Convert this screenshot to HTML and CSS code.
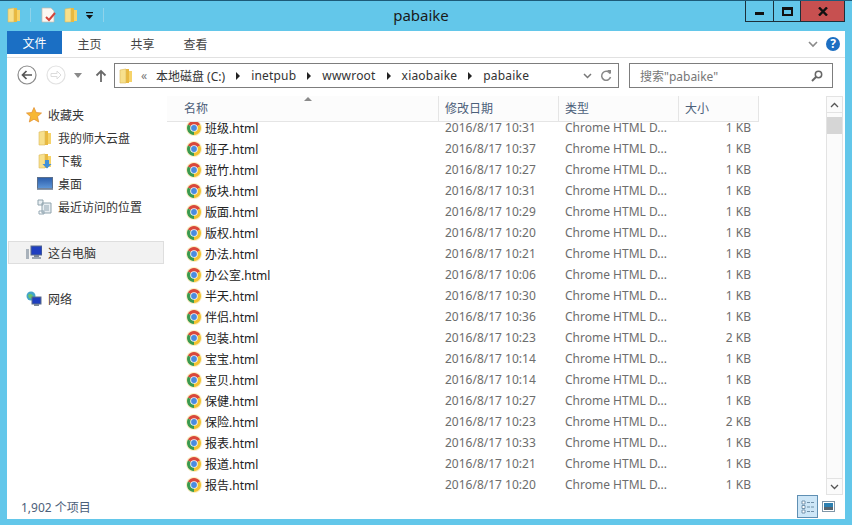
FILE: index.html
```html
<!DOCTYPE html>
<html lang="zh-CN">
<head>
    <meta charset="UTF-8">
    <title>pabaike</title>
    <link rel="stylesheet" href="styles.css">
</head>
<body>

    <svg class="defs" width="0" height="0">
        <defs>
            <linearGradient id="desk" x1="0" y1="0" x2="0" y2="1">
                <stop offset="0" stop-color="#2a5caa"/>
                <stop offset="1" stop-color="#5f97d8"/>
            </linearGradient>
        </defs>
        <symbol id="chrome" viewBox="0 0 16 16">
            <circle cx="8" cy="8" r="8" fill="#fbeec0"/>
            <path d="M8 8L1.94 4.5A7 7 0 0 1 14.06 4.5Z" fill="#d9483b"/>
            <path d="M8 8L14.06 4.5A7 7 0 0 1 8 15Z" fill="#f2c230"/>
            <path d="M8 8L8 15A7 7 0 0 1 1.94 4.5Z" fill="#3a9a50"/>
            <circle cx="8" cy="8" r="3.8" fill="#f4f4f4"/>
            <circle cx="8" cy="8" r="2.9" fill="#4a8be0"/>
        </symbol>
        <symbol id="folder" viewBox="0 0 14 16">
            <path d="M1 2L7 1V15H1Z" fill="#f7e08c"/>
            <path d="M7 1H10V15H7Z" fill="#e9b93f"/>
            <path d="M10 3H13V14H10Z" fill="#f6d36a"/>
            <path d="M1 2L7 1V15H1Z" fill="none" stroke="#dcb95a" stroke-width=".6"/>
        </symbol>
    </svg>

    <div class="titlebar">
        <div class="quick">
            <svg class="quick-folder" width="14" height="16"><use href="#folder"/></svg>
            <span class="quick-sep"></span>
            <svg class="quick-doc" width="15" height="16" viewBox="0 0 15 16">
                <path d="M1 1H10L13 4V15H1Z" fill="#fbf7f2" stroke="#c9b9ae" stroke-width=".7"/>
                <path d="M5 10L8 13L14 6" fill="none" stroke="#d2453c" stroke-width="2"/>
            </svg>
            <svg class="quick-folder2" width="14" height="16"><use href="#folder"/></svg>
            <svg class="quick-drop" width="7" height="7" viewBox="0 0 7 7">
                <path d="M0 0H7V1.2H0ZM0 3H7L3.5 7Z" fill="#111"/>
            </svg>
            <span class="quick-sep sep-end"></span>
        </div>
        <div class="title">pabaike</div>
        <div class="controls">
            <div class="ctl ctl-min"><span class="min-glyph"></span></div>
            <div class="ctl ctl-max"><span class="max-glyph"></span></div>
            <div class="ctl ctl-close">
                <svg width="10" height="9" viewBox="0 0 10 9"><path d="M1 .5L9 8.5M9 .5L1 8.5" stroke="#111" stroke-width="2.4"/></svg>
            </div>
        </div>
    </div>

    <div class="window">
        <div class="ribbon">
            <div class="tab tab-file">文件</div>
            <div class="tab">主页</div>
            <div class="tab">共享</div>
            <div class="tab">查看</div>
            <div class="ribbon-right">
                <svg width="10" height="7" viewBox="0 0 10 7"><path d="M1 1L5 5L9 1" fill="none" stroke="#8a8a8a" stroke-width="1.6"/></svg>
                <div class="help">?</div>
            </div>
        </div>

        <div class="navrow">
            <svg class="nav-back" width="20" height="20" viewBox="0 0 20 20">
                <circle cx="10" cy="10" r="9" fill="#fff" stroke="#8c8c8c" stroke-width="1.2"/>
                <path d="M15 10H6M9.5 6L5.5 10L9.5 14" fill="none" stroke="#555" stroke-width="1.7"/>
            </svg>
            <svg class="nav-fwd" width="20" height="20" viewBox="0 0 20 20">
                <circle cx="10" cy="10" r="9" fill="#fff" stroke="#e2e2e2" stroke-width="1.2"/>
                <path d="M5 8.5H11V6L15 10L11 14V11.5H5Z" fill="none" stroke="#dcdcdc"/>
            </svg>
            <svg class="nav-drop" width="8" height="5" viewBox="0 0 8 5"><path d="M0 0H8L4 5Z" fill="#8a8a8a"/></svg>
            <svg class="nav-up" width="12" height="14" viewBox="0 0 12 14"><path d="M6 13V2M1.5 6.5L6 2L10.500 6.500" fill="none" stroke="#6a6a6a" stroke-width="1.8"/></svg>
            <div class="address">
                <svg class="addr-folder" width="14" height="16"><use href="#folder"/></svg>
                <span class="addr-more">«</span>
                <span class="crumb-drive">本地磁盘 (C:)</span><span class="arrow"></span>
                <span class="crumb">inetpub</span><span class="arrow"></span>
                <span class="crumb">wwwroot</span><span class="arrow"></span>
                <span class="crumb">xiaobaike</span><span class="arrow"></span>
                <span class="crumb">pabaike</span>
                <div class="addr-right">
                    <svg width="9" height="6" viewBox="0 0 9 6"><path d="M1 1L4.500 4.500L8 1" fill="none" stroke="#777" stroke-width="1.500"/></svg>
                    <svg width="12" height="13" viewBox="0 0 12 13"><path d="M10 4.500A4.500 4.500 0 1 0 10.500 8" fill="none" stroke="#888" stroke-width="1.500"/><path d="M7 1L11 1V5Z" fill="#888"/></svg>
                </div>
            </div>
            <div class="search">
                <span class="search-text">搜索"pabaike"</span>
                <svg width="12" height="12" viewBox="0 0 12 12"><circle cx="7.500" cy="4.500" r="3.200" fill="none" stroke="#666" stroke-width="1.500"/><path d="M5 7L1 11" stroke="#666" stroke-width="2"/></svg>
            </div>
        </div>

        <div class="main">
            <nav class="sidebar">
                <div class="nav-item nav-head">
                    <svg width="16" height="16" viewBox="0 0 16 16"><path d="M8 .5L10.200 5.500L15.500 6L11.500 9.600L12.700 15L8 12.200L3.300 15L4.500 9.600L.5 6L5.800 5.500Z" fill="#f7b733" stroke="#e08a2c" stroke-width=".7"/></svg>
                    <span>收藏夹</span>
                </div>
                <div class="nav-item nav-sub">
                    <svg height="16"><use href="#folder"/></svg>
                    <span>我的师大云盘</span>
                </div>
                <div class="nav-item nav-sub">
                    <svg height="16" viewBox="0 0 14 16">
                        <use href="#folder" width="14" height="16"/>
                        <path d="M7 7H11V11H13.500L9 15.500L4.500 11H7Z" fill="#3f8fd8"/>
                    </svg>
                    <span>下载</span>
                </div>
                <div class="nav-item nav-sub">
                    <svg height="13" viewBox="0 0 16 13"><rect x=".5" y=".5" width="15" height="11" fill="url(#desk)" stroke="#5a6f8c"/><rect y="11.500" width="16" height="1.500" fill="#8a97a8"/></svg>
                    <span>桌面</span>
                </div>
                <div class="nav-item nav-sub">
                    <svg height="16" viewBox="0 0 16 16"><path d="M1 1H6V6H1ZM5 4H14V14H5Z" fill="#e8eef2" stroke="#8fa3ad"/><path d="M7 7H12M7 9H12M7 11H12M2 12H7V15H2Z" fill="none" stroke="#93a7b3"/></svg>
                    <span>最近访问的位置</span>
                </div>
                <div class="nav-item nav-head nav-pc">
                    <svg width="16" height="15" viewBox="0 0 16 15"><rect x="5" y="1" width="11" height="9" fill="#1f3fc0" stroke="#5b6d8a"/><rect x="8" y="10" width="5" height="2" fill="#7a8797"/><rect x="6" y="12" width="9" height="2" fill="#9aa5b1"/><rect y="4" width="3" height="10" fill="#a9b2bb"/></svg>
                    <span>这台电脑</span>
                </div>
                <div class="nav-item nav-head nav-net">
                    <svg width="16" height="16" viewBox="0 0 16 16"><circle cx="5" cy="5" r="4.500" fill="#43a5c9"/><path d="M2 4C4 2 6 3 7 5S5 8 3 7Z" fill="#6cc36a"/><rect x="6" y="6" width="9" height="7" fill="#1f3fc0" stroke="#5b6d8a"/><rect x="8" y="13" width="5" height="2" fill="#7a8797"/></svg>
                    <span>网络</span>
                </div>
            </nav>

            <div class="files">
                <div class="listpane">
                    <div class="header">
                        <div class="hcol col-name">名称<span class="sort"></span></div>
                        <div class="hcol col-date">修改日期</div>
                        <div class="hcol col-type">类型</div>
                        <div class="hcol col-size">大小</div>
                    </div>
                    <div class="rows">
                        <div class="rows-inner">
                            <div class="row"><div class="cell-name"><svg width="16" height="16"><use href="#chrome"/></svg>班级.html</div><div class="cell cell-date">2016/8/17 10:31</div><div class="cell cell-type">Chrome HTML D...</div><div class="cell cell-size">1 KB</div></div>
                            <div class="row"><div class="cell-name"><svg width="16" height="16"><use href="#chrome"/></svg>班子.html</div><div class="cell cell-date">2016/8/17 10:37</div><div class="cell cell-type">Chrome HTML D...</div><div class="cell cell-size">1 KB</div></div>
                            <div class="row"><div class="cell-name"><svg width="16" height="16"><use href="#chrome"/></svg>斑竹.html</div><div class="cell cell-date">2016/8/17 10:27</div><div class="cell cell-type">Chrome HTML D...</div><div class="cell cell-size">1 KB</div></div>
                            <div class="row"><div class="cell-name"><svg width="16" height="16"><use href="#chrome"/></svg>板块.html</div><div class="cell cell-date">2016/8/17 10:31</div><div class="cell cell-type">Chrome HTML D...</div><div class="cell cell-size">1 KB</div></div>
                            <div class="row"><div class="cell-name"><svg width="16" height="16"><use href="#chrome"/></svg>版面.html</div><div class="cell cell-date">2016/8/17 10:29</div><div class="cell cell-type">Chrome HTML D...</div><div class="cell cell-size">1 KB</div></div>
                            <div class="row"><div class="cell-name"><svg width="16" height="16"><use href="#chrome"/></svg>版权.html</div><div class="cell cell-date">2016/8/17 10:20</div><div class="cell cell-type">Chrome HTML D...</div><div class="cell cell-size">1 KB</div></div>
                            <div class="row"><div class="cell-name"><svg width="16" height="16"><use href="#chrome"/></svg>办法.html</div><div class="cell cell-date">2016/8/17 10:21</div><div class="cell cell-type">Chrome HTML D...</div><div class="cell cell-size">1 KB</div></div>
                            <div class="row"><div class="cell-name"><svg width="16" height="16"><use href="#chrome"/></svg>办公室.html</div><div class="cell cell-date">2016/8/17 10:06</div><div class="cell cell-type">Chrome HTML D...</div><div class="cell cell-size">1 KB</div></div>
                            <div class="row"><div class="cell-name"><svg width="16" height="16"><use href="#chrome"/></svg>半天.html</div><div class="cell cell-date">2016/8/17 10:30</div><div class="cell cell-type">Chrome HTML D...</div><div class="cell cell-size">1 KB</div></div>
                            <div class="row"><div class="cell-name"><svg width="16" height="16"><use href="#chrome"/></svg>伴侣.html</div><div class="cell cell-date">2016/8/17 10:36</div><div class="cell cell-type">Chrome HTML D...</div><div class="cell cell-size">1 KB</div></div>
                            <div class="row"><div class="cell-name"><svg width="16" height="16"><use href="#chrome"/></svg>包装.html</div><div class="cell cell-date">2016/8/17 10:23</div><div class="cell cell-type">Chrome HTML D...</div><div class="cell cell-size">2 KB</div></div>
                            <div class="row"><div class="cell-name"><svg width="16" height="16"><use href="#chrome"/></svg>宝宝.html</div><div class="cell cell-date">2016/8/17 10:14</div><div class="cell cell-type">Chrome HTML D...</div><div class="cell cell-size">1 KB</div></div>
                            <div class="row"><div class="cell-name"><svg width="16" height="16"><use href="#chrome"/></svg>宝贝.html</div><div class="cell cell-date">2016/8/17 10:14</div><div class="cell cell-type">Chrome HTML D...</div><div class="cell cell-size">1 KB</div></div>
                            <div class="row"><div class="cell-name"><svg width="16" height="16"><use href="#chrome"/></svg>保健.html</div><div class="cell cell-date">2016/8/17 10:27</div><div class="cell cell-type">Chrome HTML D...</div><div class="cell cell-size">1 KB</div></div>
                            <div class="row"><div class="cell-name"><svg width="16" height="16"><use href="#chrome"/></svg>保险.html</div><div class="cell cell-date">2016/8/17 10:23</div><div class="cell cell-type">Chrome HTML D...</div><div class="cell cell-size">2 KB</div></div>
                            <div class="row"><div class="cell-name"><svg width="16" height="16"><use href="#chrome"/></svg>报表.html</div><div class="cell cell-date">2016/8/17 10:33</div><div class="cell cell-type">Chrome HTML D...</div><div class="cell cell-size">1 KB</div></div>
                            <div class="row"><div class="cell-name"><svg width="16" height="16"><use href="#chrome"/></svg>报道.html</div><div class="cell cell-date">2016/8/17 10:21</div><div class="cell cell-type">Chrome HTML D...</div><div class="cell cell-size">1 KB</div></div>
                            <div class="row"><div class="cell-name"><svg width="16" height="16"><use href="#chrome"/></svg>报告.html</div><div class="cell cell-date">2016/8/17 10:20</div><div class="cell cell-type">Chrome HTML D...</div><div class="cell cell-size">1 KB</div></div>
                        </div>
                    </div>
                </div>
                <div class="scrollbar">
                    <div class="sb-btn"><svg width="9" height="6" viewBox="0 0 9 6"><path d="M1 5L4.500 1.500L8 5" fill="none" stroke="#555" stroke-width="1.300"/></svg></div>
                    <div class="sb-thumb"></div>
                    <div class="sb-track"></div>
                    <div class="sb-btn"><svg width="9" height="6" viewBox="0 0 9 6"><path d="M1 1L4.500 4.500L8 1" fill="none" stroke="#555" stroke-width="1.300"/></svg></div>
                </div>
            </div>
        </div>

        <div class="status">
            <span class="status-text">1,902 个项目</span>
            <div class="views">
                <div class="view view-on">
                    <svg width="14" height="14" viewBox="0 0 14 14"><path d="M1 1H4V4H1ZM1 5.500H4V8.500H1ZM1 10H4V13H1Z" fill="#fff" stroke="#5a7f9c" stroke-width=".8"/><path d="M6 2.500H13M6 7H13M6 11.500H13" stroke="#6f8fa8" stroke-width="1.200" stroke-dasharray="3 1"/></svg>
                </div>
                <div class="view">
                    <svg width="13" height="11" viewBox="0 0 13 11"><rect x=".5" y=".5" width="12" height="10" fill="#fff" stroke="#7f96a8"/><rect x="2" y="2" width="9" height="4" fill="#2b7fb0"/><rect x="2" y="6" width="9" height="3" fill="#55646f"/></svg>
                </div>
            </div>
        </div>
    </div>

</body>
</html>
```

FILE: styles.css
```css
* {
    box-sizing: border-box;
}

html, body {
    margin: 0;
    height: 100%;
}

body {
    width: 852px;
    height: 525px;
    overflow: hidden;
    background-color: #63c7ea;
    font-family: "Noto Sans", "Noto Sans CJK SC", sans-serif;
    font-size: 12px;
    color: #333;
    display: flex;
    flex-direction: column;
}

.defs {
    display: block;
    height: 0;
}

svg {
    display: block;
    flex-shrink: 0;
}

/* title bar */
.titlebar {
    height: 31px;
    flex-shrink: 0;
    display: flex;
    border-top: 1px solid #1d5a78;
}

.quick {
    width: 325px;
    display: flex;
    align-items: center;
    padding: 0 0 2px 7px;
}

.quick-sep {
    width: 1px;
    height: 14px;
    background-color: #8fd3ea;
    margin-left: 9px;
}

.quick-doc {
    margin-left: 10px;
}

.quick-folder2 {
    margin-left: 8px;
}

.quick-drop {
    margin-left: 8px;
}

.sep-end {
    margin-left: 10px;
}

.title {
    width: 192px;
    text-align: center;
    font-size: 15px;
    line-height: 28px;
    color: #1a1a1a;
}

.controls {
    margin-left: 228px;
    width: 100px;
    height: 21px;
    display: flex;
    border: 1px solid #1c2f3a;
    border-top: none;
}

.ctl {
    height: 100%;
    display: flex;
    align-items: center;
    justify-content: center;
}

.ctl-min {
    width: 28px;
    border-right: 1px solid #1c2f3a;
}

.ctl-max {
    width: 26px;
}

.ctl-close {
    flex: 1;
    background-color: #c75050;
    border-left: 1px solid #1c2f3a;
}

.min-glyph {
    width: 9px;
    height: 3px;
    margin-top: 5px;
    background-color: #111;
}

.max-glyph {
    width: 11px;
    height: 9px;
    border: 2px solid #111;
    border-top-width: 3px;
}

/* main window */
.window {
    height: 488px;
    margin: 0 7px;
    background-color: #fff;
    display: flex;
    flex-direction: column;
}

.ribbon {
    height: 27px;
    flex-shrink: 0;
    display: flex;
    align-items: flex-start;
    border-bottom: 1px solid #e1e1e1;
}

.tab {
    width: 53px;
    height: 23px;
    line-height: 27px;
    text-align: center;
    color: #444;
}

.tab-file {
    width: 55px;
    line-height: 25px;
    background-color: #1b6fc4;
    color: #fff;
    margin-right: 1px;
}

.ribbon-right {
    margin-left: auto;
    height: 26px;
    padding-right: 5px;
    display: flex;
    align-items: center;
    gap: 8px;
}

.help {
    width: 14px;
    height: 14px;
    border-radius: 50%;
    background-color: #1d6fc2;
    color: #fff;
    font-size: 12px;
    font-weight: bold;
    line-height: 14px;
    text-align: center;
}

.navrow {
    height: 35px;
    flex-shrink: 0;
    display: flex;
    align-items: flex-start;
    padding-top: 5px;
}

.nav-back {
    margin: 2px 0 0 10px;
}

.nav-fwd {
    margin: 2px 0 0 9px;
}

.nav-drop {
    margin: 10px 0 0 8px;
}

.nav-up {
    margin: 6px 0 0 13px;
}

.address {
    width: 505px;
    height: 25px;
    margin-left: 7px;
    border: 1px solid #7d7d7d;
    display: flex;
    align-items: center;
    padding-left: 4px;
    color: #333;
}

.addr-more {
    margin-left: 8px;
    color: #777;
    width: 15px;
}

.crumb {
    letter-spacing: .2px;
}

.arrow {
    width: 0;
    height: 0;
    margin: 0 11px;
    border-left: 4px solid #222;
    border-top: 4px solid transparent;
    border-bottom: 4px solid transparent;
}

.addr-right {
    margin-left: auto;
    padding-right: 6px;
    display: flex;
    align-items: center;
    gap: 8px;
}

.search {
    width: 204px;
    height: 25px;
    margin-left: 10px;
    border: 1px solid #7d7d7d;
    display: flex;
    align-items: center;
    justify-content: space-between;
    padding: 0 9px 0 10px;
    color: #777;
}

/* sidebar + list */
.main {
    height: 402px;
    flex-shrink: 0;
    display: flex;
}

.sidebar {
    width: 160px;
    flex-shrink: 0;
    padding-top: 10px;
}

.nav-item {
    height: 23px;
    display: flex;
    align-items: center;
    color: #333;
}

.nav-head {
    padding-left: 19px;
    gap: 6px;
}

.nav-sub {
    padding-left: 30px;
    gap: 5px;
}

.nav-sub svg {
    width: 16px;
}

.nav-pc {
    margin: 23px 0 0 1px;
    width: 156px;
    padding-left: 17px;
    background-color: #f2f2f2;
    border: 1px solid #dedede;
}

.nav-net {
    margin-top: 23px;
}

.files {
    flex: 1;
    min-width: 0;
    display: flex;
    padding-top: 3px;
    padding-right: 2px;
}

.listpane {
    flex: 1;
    min-width: 0;
    display: flex;
    flex-direction: column;
}

.header {
    height: 26px;
    flex-shrink: 0;
    width: 592px;
    display: flex;
    background-color: #fcfcfc;
    border-bottom: 1px solid #e5e5e5;
    position: relative;
}

.hcol {
    line-height: 25px;
    padding-left: 6px;
    color: #4c607a;
    border-right: 1px solid #e5e5e5;
}

.col-name {
    width: 272px;
    padding-left: 17px;
}

.col-date,
.col-type {
    width: 120px;
}

.col-size {
    width: 80px;
}

.sort {
    position: absolute;
    left: 137px;
    top: 1px;
    width: 0;
    height: 0;
    border-left: 4px solid transparent;
    border-right: 4px solid transparent;
    border-bottom: 4px solid #8a8a8a;
}

.rows {
    flex: 1;
    min-height: 0;
    overflow: hidden;
}

.rows-inner {
    margin-top: -5px;
}

.row {
    height: 21px;
    display: flex;
    align-items: center;
}

.cell-name {
    width: 272px;
    display: flex;
    align-items: center;
    gap: 3px;
    padding-left: 19px;
    color: #222;
}

.cell {
    color: #6d6d6d;
}

.cell-date,
.cell-type {
    width: 120px;
    padding-left: 6px;
}

.cell-size {
    width: 72px;
    text-align: right;
}

.scrollbar {
    width: 17px;
    flex-shrink: 0;
    display: flex;
    flex-direction: column;
    background-color: #fbfbfb;
    border-left: 1px solid #e3e3e3;
    border-right: 1px solid #e3e3e3;
}

.sb-btn {
    height: 17px;
    flex-shrink: 0;
    display: flex;
    align-items: center;
    justify-content: center;
    border-top: 1px solid #e3e3e3;
    border-bottom: 1px solid #e3e3e3;
}

.sb-thumb {
    height: 17px;
    flex-shrink: 0;
    margin-top: 4px;
    background-color: #d6d6d6;
}

.sb-track {
    flex: 1;
}

/* status bar */
.status {
    height: 24px;
    flex-shrink: 0;
    display: flex;
    align-items: center;
    padding: 0 6px 1px 14px;
    color: #4c607a;
}

.views {
    margin-left: auto;
    display: flex;
    height: 100%;
}

.view {
    width: 21px;
    height: 23px;
    display: flex;
    align-items: center;
    justify-content: center;
}

.view-on {
    background-color: #cde6f7;
    border: 1px solid #5f8fb3;
}
```
